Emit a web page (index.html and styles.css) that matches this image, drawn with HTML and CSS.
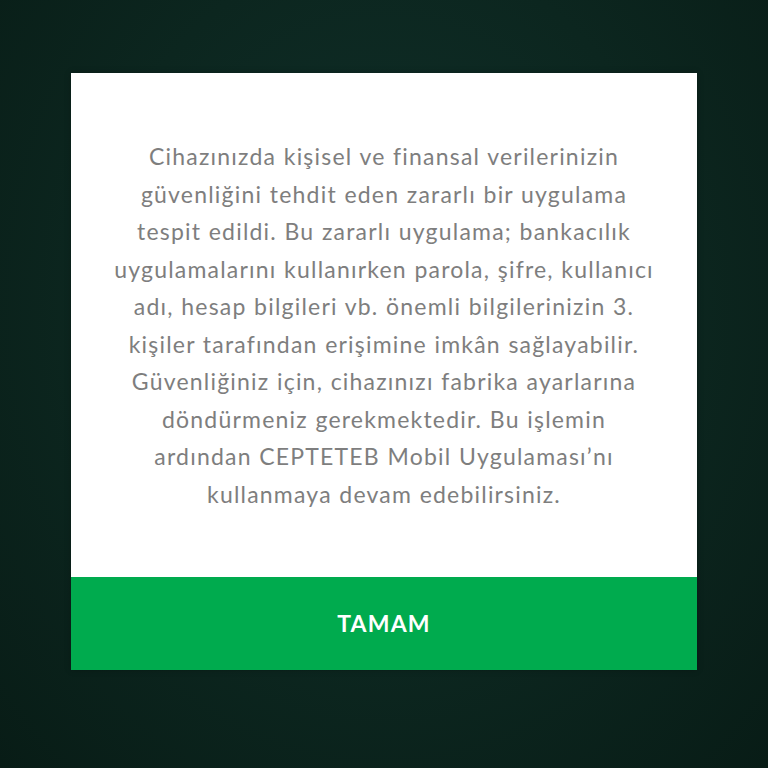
FILE: index.html
```html
<!DOCTYPE html>
<html lang="tr">
<head>
<meta charset="utf-8">
<link rel="stylesheet" href="styles.css">
</head>
<body>
<div class="screen">
  <div class="dialog">
    <div class="body">
      <p class="message">Cihazınızda kişisel ve finansal verilerinizin<br>güvenliğini tehdit eden zararlı bir uygulama<br>tespit edildi. Bu zararlı uygulama; bankacılık<br>uygulamalarını kullanırken parola, şifre, kullanıcı<br>adı, hesap bilgileri vb. önemli bilgilerinizin 3.<br>kişiler tarafından erişimine imkân sağlayabilir.<br>Güvenliğiniz için, cihazınızı fabrika ayarlarına<br>döndürmeniz gerekmektedir. Bu işlemin<br>ardından CEPTETEB Mobil Uygulaması’nı<br>kullanmaya devam edebilirsiniz.</p>
    </div>
    <button class="ok">TAMAM</button>
  </div>
</div>
</body>
</html>
```
FILE: styles.css
```css
html, body {
  margin: 0;
  padding: 0;
}
body {
  width: 768px;
  height: 768px;
  overflow: hidden;
  font-family: Lato, "Open Sans", sans-serif;
}
.screen {
  width: 768px;
  height: 768px;
  background: radial-gradient(ellipse at 50% 40%, #10302a 0%, #0c261f 55%, #081c16 100%);
  padding-top: 73px;
  box-sizing: border-box;
  display: flex;
  justify-content: center;
  align-items: flex-start;
}
.dialog {
  width: 626px;
  background: #ffffff;
  display: flex;
  flex-direction: column;
  box-shadow: 0 0 6px rgba(0,0,0,0.25);
}
.body {
  height: 504px;
  box-sizing: border-box;
  padding-top: 65px;
}
.message {
  margin: 0;
  text-align: center;
  color: #7e7e7e;
  font-size: 23px;
  line-height: 37.5px;
  letter-spacing: 1.2px;
  word-spacing: 0.5px;
  white-space: nowrap;
}
.ok {
  height: 93px;
  border: 0;
  margin: 0;
  background: #00ab4e;
  color: #ffffff;
  font-family: Lato, "Open Sans", sans-serif;
  font-weight: 700;
  font-size: 23px;
  letter-spacing: 1.2px;
  padding: 0;
  padding-bottom: 2px;
  cursor: pointer;
}
```
